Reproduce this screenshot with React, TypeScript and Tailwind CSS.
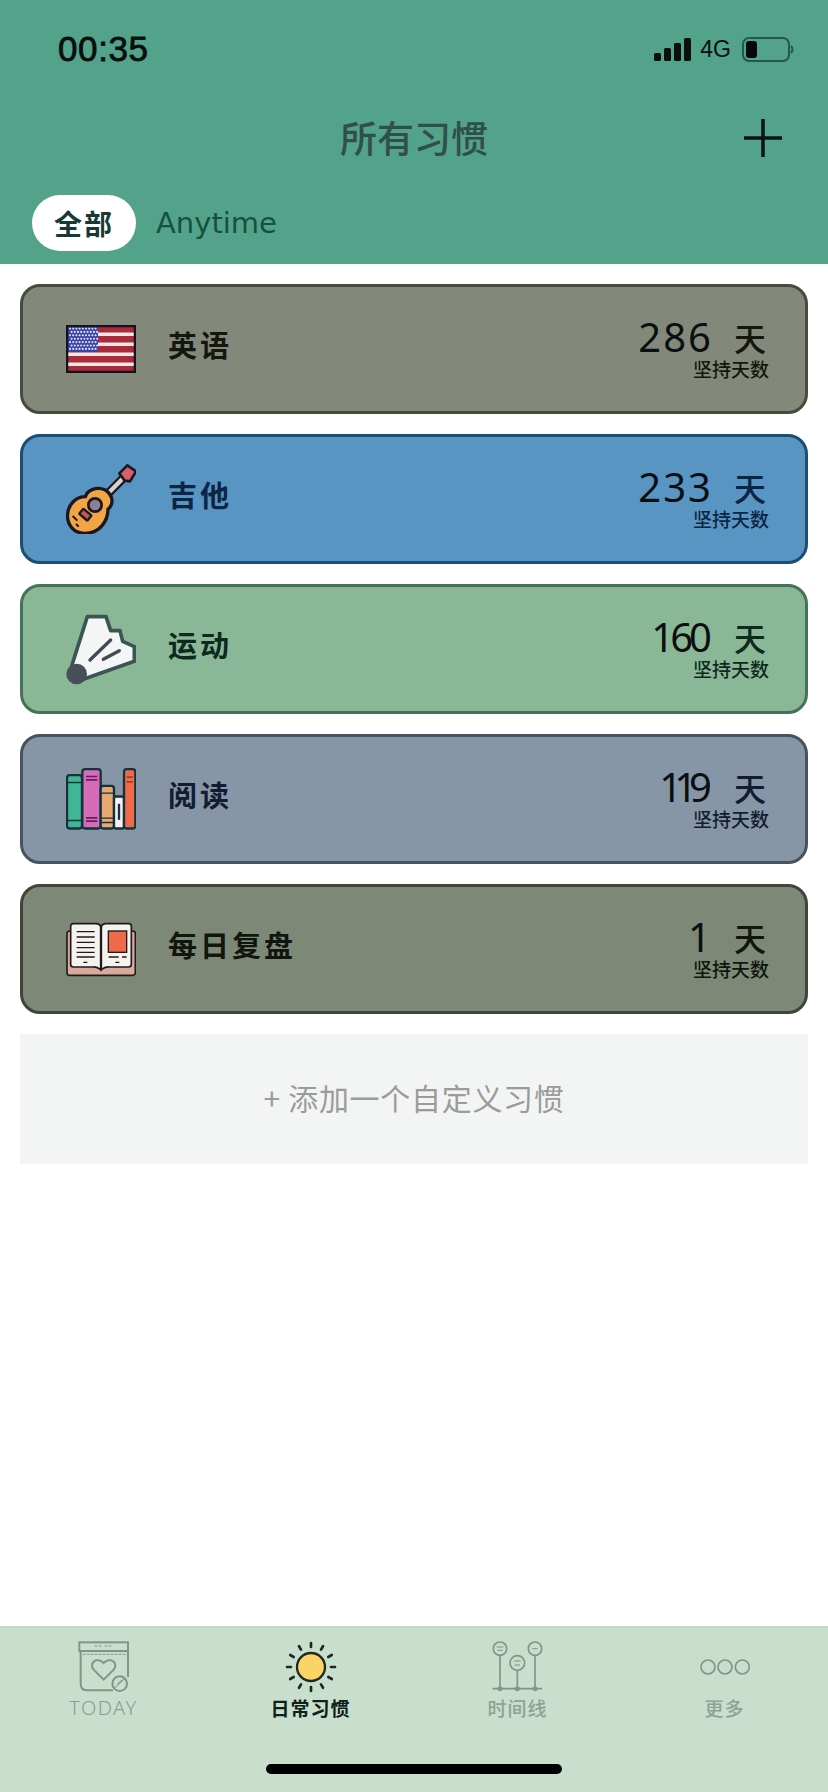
const CJK = "font-['Noto_Sans_CJK_SC','Noto_Sans',sans-serif]";

function Flag() {
  const whites = [7.5, 17.5, 27.5, 37.5];
  const dots: [number, number][] = [];
  for (let y = 0; y < 7; y++) for (let x = 0; x < 9; x++) dots.push([4 + x * 3.2 + (y % 2) * 1.6, 3.5 + y * 3.4]);
  return (
    <svg width="70" height="48" viewBox="0 0 70 48">
      <rect x="1" y="1" width="68" height="46" fill="#a92a38" />
      {whites.map((y) => (
        <rect key={y} x="2" y={y} width="66" height="3.5" fill="#f1e7e6" />
      ))}
      <rect x="1" y="1" width="31" height="26" fill="#3d44a8" />
      {dots.map(([x, y], i) => (
        <circle key={i} cx={x} cy={y} r="1.05" fill="#dfe3f6" />
      ))}
      <rect x="1" y="1" width="68" height="46" fill="none" stroke="#15131f" strokeWidth="2.5" />
    </svg>
  );
}

function Guitar() {
  return (
    <svg width="70" height="70" viewBox="198 582 210 210">
      <line x1="290" y1="705" x2="372" y2="622" stroke="#1a1720" strokeWidth="26" />
      <line x1="290" y1="705" x2="372" y2="622" stroke="#d8d2cc" strokeWidth="13" />
      <path d="M358 610 L382 586 L408 604 L390 634 L374 632 Z" fill="#d75f6a" stroke="#1a1720" strokeWidth="8" strokeLinejoin="round" />
      <path d="M203 730 C207 700 230 680 256 680 C262 660 290 648 316 660 C340 676 342 702 324 718 C324 752 300 790 254 790 C220 790 199 762 203 730 Z" fill="#f2a544" stroke="#1a1720" strokeWidth="10" />
      <circle cx="285" cy="705" r="20" fill="#8e7f92" stroke="#1a1720" strokeWidth="8" />
      <rect x="240" y="724" width="32" height="20" rx="3" transform="rotate(40 256 734)" fill="#c4594c" stroke="#1a1720" strokeWidth="7" />
      <path d="M218 738 L232 752 M228 762 L236 770" stroke="#1a1720" strokeWidth="6" />
    </svg>
  );
}

function Shuttle() {
  return (
    <svg width="70" height="71" viewBox="198 100 210 213">
      <path d="M262 108 L318 108 L332 150 L360 150 L368 182 L403 198 L403 242 L250 296 L215 256 Z" fill="#f4f6f5" stroke="#3b5552" strokeWidth="11" strokeLinejoin="round" />
      <path d="M270 238 L332 178 M310 236 L358 210" stroke="#434a55" strokeWidth="10" strokeLinecap="round" />
      <circle cx="230" cy="280" r="31" fill="#494e5b" />
    </svg>
  );
}

function Books() {
  const s = "#14323a";
  return (
    <svg width="70" height="62" viewBox="198 565 210 185">
      <rect x="201" y="586" width="45" height="160" rx="8" fill="#3fb794" stroke={s} strokeWidth="7" />
      <path d="M201 608 H246 M201 722 H246" stroke={s} strokeWidth="5" />
      <rect x="247" y="568" width="55" height="178" rx="8" fill="#d56bb9" stroke={s} strokeWidth="7" />
      <path d="M258 590 H292 M258 600 H292 M258 714 H292 M258 724 H292" stroke="#6b1c5c" strokeWidth="5" />
      <rect x="302" y="618" width="40" height="128" rx="8" fill="#e8a872" stroke={s} strokeWidth="7" />
      <path d="M302 640 H342 M302 715 H342 M302 728 H342" stroke={s} strokeWidth="4" />
      <rect x="342" y="650" width="30" height="96" rx="6" fill="#f5f0f2" stroke={s} strokeWidth="7" />
      <path d="M357 672 V720" stroke={s} strokeWidth="7" />
      <rect x="372" y="568" width="34" height="178" rx="8" fill="#ee6a48" stroke={s} strokeWidth="7" />
      <path d="M380 592 H398 M380 606 H398" stroke="#7d2a1f" strokeWidth="4" />
    </svg>
  );
}

function OpenBook() {
  const s = "#1f1a1c";
  return (
    <svg width="70" height="55" viewBox="198 1025 210 165">
      <rect x="201" y="1052" width="205" height="133" rx="8" fill="#d9aa9b" stroke={s} strokeWidth="5" />
      <path d="M212 1038 Q212 1030 220 1030 H290 Q302 1032 302 1042 V1168 Q290 1158 278 1160 H220 Q212 1160 212 1152 Z" fill="#f6f3ee" stroke={s} strokeWidth="5" />
      <path d="M394 1038 Q394 1030 386 1030 H316 Q304 1032 304 1042 V1168 Q316 1158 328 1160 H386 Q394 1160 394 1152 Z" fill="#f6f3ee" stroke={s} strokeWidth="5" />
      <path d="M230 1054 H284 M230 1070 H284 M230 1086 H284 M230 1102 H284 M230 1116 H284 M230 1130 H284 M250 1146 H262 M326 1130 H356 M366 1130 H380 M346 1146 H358" stroke={s} strokeWidth="4" />
      <rect x="325" y="1052" width="55" height="64" fill="#ee6a48" stroke={s} strokeWidth="4" />
    </svg>
  );
}

function TodayIcon() {
  const c = "#7f9689";
  return (
    <svg width="52" height="52" viewBox="235 92 156 156" fill="none" stroke={c} strokeWidth="6">
      <rect x="239" y="96" width="146" height="26" />
      <path d="M243 122 V220 Q243 240 263 240 H340 M385 122 V200" />
      <path d="M250 132 H380 M285 107 H305 M315 107 H335" strokeWidth="3" strokeDasharray="8 4" />
      <path d="M312 208 L282 178 C266 158 292 138 312 158 C332 138 358 158 342 178 Z" />
      <circle cx="360" cy="220" r="22" fill="#c8dfcd" />
      <path d="M344 234 L376 204 M352 222 L368 208" strokeWidth="3" />
    </svg>
  );
}

function SunIcon() {
  const rays = Array.from({ length: 12 }, (_, i) => (i * Math.PI) / 6);
  return (
    <svg width="52" height="52" viewBox="-78 -78 156 156">
      {rays.map((a, i) => (
        <line key={i} x1={Math.sin(a) * 60} y1={-Math.cos(a) * 60} x2={Math.sin(a) * 72} y2={-Math.cos(a) * 72} stroke="#1b2a24" strokeWidth="8" strokeLinecap="round" />
      ))}
      <circle r="42" fill="#fad466" stroke="#1b2a24" strokeWidth="7" />
    </svg>
  );
}

function TimelineIcon() {
  const c = "#7f9689";
  return (
    <svg width="52" height="52" viewBox="236 92 156 156" fill="none" stroke={c} strokeWidth="5">
      <circle cx="260" cy="115" r="20" />
      <circle cx="312" cy="158" r="22" />
      <circle cx="365" cy="115" r="20" />
      <path d="M260 135 V230 M312 180 V230 M365 135 V230 M238 235 H386" />
      <circle cx="260" cy="235" r="5" />
      <circle cx="312" cy="235" r="5" />
      <circle cx="365" cy="235" r="5" />
      <path d="M250 110 H270 M252 120 H268 M302 152 H322 M304 164 H320 M357 115 H373" strokeWidth="3" />
    </svg>
  );
}

function MoreIcon() {
  return (
    <svg width="52" height="52" viewBox="0 0 156 156" fill="none" stroke="#7f9689" strokeWidth="5">
      <circle cx="27" cy="78" r="21" />
      <circle cx="78" cy="78" r="21" />
      <circle cx="130" cy="78" r="21" />
    </svg>
  );
}

const habits = [
  { name: "英语", days: "286", track: "tracking-[2px]", gap: "ml-[21px]", icon: <Flag />, bg: "bg-[#82897a]", border: "border-[#464b3d]", text: "text-[#14170f]" },
  { name: "吉他", days: "233", track: "tracking-[2px]", gap: "ml-[21px]", icon: <Guitar />, bg: "bg-[#5895c3]", border: "border-[#1b4e70]", text: "text-[#0d2444]" },
  { name: "运动", days: "160", track: "tracking-[-4px]", gap: "ml-[26px]", icon: <Shuttle />, bg: "bg-[#8ab896]", border: "border-[#44735a]", text: "text-[#0e2a20]" },
  { name: "阅读", days: "119", track: "tracking-[-8px]", gap: "ml-[30px]", icon: <Books />, bg: "bg-[#8796a6]", border: "border-[#47535f]", text: "text-[#111d33]" },
  { name: "每日复盘", days: "1", track: "tracking-normal", gap: "ml-[23px]", icon: <OpenBook />, bg: "bg-[#7d8876]", border: "border-[#3f4538]", text: "text-[#10150e]" },
];

const tabs = [
  { label: "TODAY", icon: <TodayIcon />, cls: "font-['Noto_Sans',sans-serif] font-light text-[20px] tracking-[1.5px] text-[#84a092]" },
  { label: "日常习惯", icon: <SunIcon />, cls: "font-bold text-[19px] tracking-[1px] text-[#10201a]" },
  { label: "时间线", icon: <TimelineIcon />, cls: "font-medium text-[19px] tracking-[1px] text-[#8ba295]" },
  { label: "更多", icon: <MoreIcon />, cls: "font-medium text-[19px] tracking-[1px] text-[#8ba295]" },
];

export default function App() {
  return (
    <div className={`flex h-[1792px] w-[828px] flex-col overflow-hidden bg-white ${CJK}`}>
      <header className="flex h-[264px] shrink-0 flex-col bg-[#53a28a]">
        <div className="flex h-[98px] items-center justify-between pl-[58px] pr-[34px]">
          <span className="font-['Liberation_Sans',sans-serif] text-[35px] font-normal tracking-[0.6px] text-[#0a0f0d] [-webkit-text-stroke:0.8px_#0a0f0d]">00:35</span>
          <div className="flex items-center">
            <svg width="37" height="23" viewBox="0 0 37 23" className="mr-[9px]" fill="#0b0f0d">
              <rect x="0" y="15" width="7" height="8" rx="1.5" />
              <rect x="10" y="10" width="7" height="13" rx="1.5" />
              <rect x="20" y="5" width="7" height="18" rx="1.5" />
              <rect x="30" y="0" width="7" height="23" rx="1.5" />
            </svg>
            <span className="mr-[11px] font-['Liberation_Sans',sans-serif] text-[23px] text-[#0b0f0d]">4G</span>
            <svg width="52" height="25" viewBox="0 0 52 25" fill="none">
              <rect x="1" y="1" width="46" height="23" rx="6" stroke="#23584a" strokeWidth="2" />
              <rect x="4" y="4" width="11" height="17" rx="3" fill="#06090a" />
              <path d="M49 9 Q52 12.5 49 16" stroke="#23584a" strokeWidth="2" />
            </svg>
          </div>
        </div>
        <div className="relative flex h-[82px] items-center justify-center pb-[4px]">
          <span className="text-[37px] font-medium leading-none text-[#2f4f48]">所有习惯</span>
          <svg width="40" height="40" viewBox="0 0 40 40" className="absolute right-[45px] top-[20px]">
            <path d="M20 1 V39 M1 20 H39" stroke="#0b1412" strokeWidth="3.5" />
          </svg>
        </div>
        <div className="flex items-start pl-[32px] pt-[15px]">
          <div className="flex h-[56px] w-[104px] items-center justify-center rounded-[28px] bg-white text-[28px] font-bold tracking-[2px] text-[#173a33]">全部</div>
          <span className="ml-[20px] mt-[8px] font-['DejaVu_Sans',sans-serif] text-[29px] leading-[40px] text-[#14523f]">Anytime</span>
        </div>
      </header>

      <main className="flex flex-1 flex-col gap-[20px] px-[20px] pt-[20px]">
        {habits.map((h) => (
          <div key={h.name} className={`flex h-[130px] items-center rounded-[20px] border-[3px] pl-[43px] pr-[36px] ${h.bg} ${h.border} ${h.text}`}>
            <div className="flex w-[70px] items-center justify-center">{h.icon}</div>
            <span className="ml-[32px] mb-[10px] text-[29px] font-bold leading-none tracking-[3px]">{h.name}</span>
            <div className="ml-auto flex flex-col items-end">
              <div className="flex items-center pr-[3px]">
                <span className={`font-['Noto_Sans',sans-serif] text-[40px] font-normal leading-[38px] text-[#0c0f12] ${h.track}`}>{h.days}</span>
                <span className={`text-[32px] font-medium leading-[38px] ${h.gap}`}>天</span>
              </div>
              <span className="mt-[2px] text-[19px] font-medium leading-[22px]">坚持天数</span>
            </div>
          </div>
        ))}
        <div className="flex h-[130px] items-center justify-center bg-[#f3f5f4] pb-[4px] text-[30px] tracking-[0.7px] text-[#9a9c9b]">+ 添加一个自定义习惯</div>
      </main>

      <nav className="flex h-[166px] shrink-0 flex-col border-t-2 border-[#bddac7] bg-[#c8dfcd]">
        <div className="grid grid-cols-4 pt-[13px]">
          {tabs.map((t) => (
            <div key={t.label} className="flex flex-col items-center">
              {t.icon}
              <span className={`mt-[2px] leading-[26px] ${t.cls}`}>{t.label}</span>
            </div>
          ))}
        </div>
        <div className="mx-auto mt-[43px] h-[10px] w-[296px] rounded-full bg-black" />
      </nav>
    </div>
  );
}
